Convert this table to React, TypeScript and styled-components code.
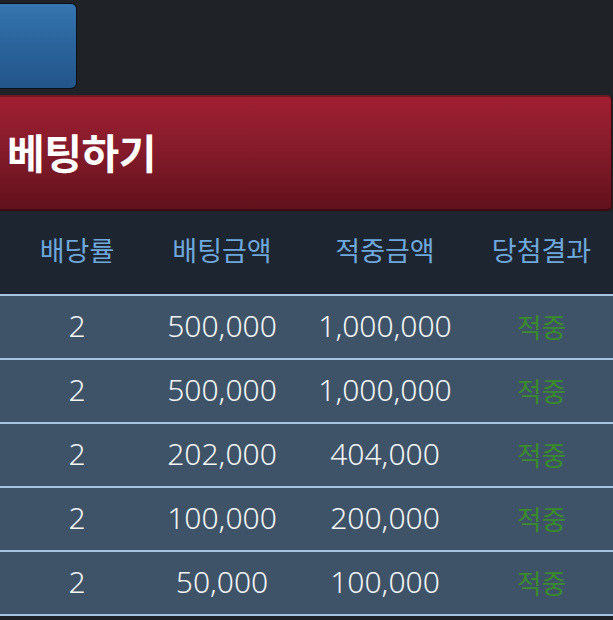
import React from "react";
import styled, { createGlobalStyle } from "styled-components";

const Global = createGlobalStyle`
  html, body { margin: 0; padding: 0; background: #1f2226; }
  body { font-family: "Noto Sans CJK KR", "Noto Sans", sans-serif; overflow: hidden; }
`;

const Page = styled.div`
  width: 613px;
  height: 620px;
  overflow: hidden;
  display: flex;
  flex-direction: column;
  background: #1f2226;
`;

const TopBar = styled.div`
  display: flex;
  padding-top: 3px;
  height: 86px;
`;

const BlueButton = styled.button`
  width: 77px;
  height: 86px;
  padding: 0;
  border: 1px solid #0b1119;
  border-left: none;
  border-radius: 0 6px 6px 0;
  background: linear-gradient(180deg, #3676b0 0%, #2a639b 50%, #23568a 100%);
`;

const TitleBar = styled.div`
  margin-top: 6px;
  margin-right: 1px;
  height: 112px;
  display: flex;
  align-items: center;
  padding-left: 7px;
  border-top: 2px solid #6e1a20;
  border-bottom: 2px solid #3c0a10;
  border-right: 1px solid #3c0a10;
  border-radius: 0 5px 5px 0;
  background: linear-gradient(180deg, #a01f31 0%, #861b2b 45%, #62111c 100%);
`;

const Title = styled.h1`
  margin: 0;
  color: #ffffff;
  font-size: 41px;
  font-weight: 700;
  letter-spacing: -0.5px;
  line-height: 1;
  padding-bottom: 4px;
`;

const Table = styled.div`
  display: flex;
  flex-direction: column;
  background: #1c2530;
  margin-top: 1px;
`;

const Row = styled.div<{ $head?: boolean }>`
  display: grid;
  grid-template-columns: 154px 136px 190px 1fr;
  align-items: center;
  height: ${(p) => (p.$head ? "82px" : "62px")};
  background: ${(p) => (p.$head ? "#1c2530" : "#3e5367")};
  border-bottom: 2px solid #a7c5e2;
  padding-right: 10px;
`;

const Cell = styled.div<{ $kind?: "head" | "num" | "win" }>`
  text-align: center;
  font-size: ${(p) => (p.$kind === "num" ? "30px" : "27px")};
  font-weight: ${(p) => (p.$kind === "num" ? 300 : 400)};
  font-family: ${(p) =>
    p.$kind === "num"
      ? '"Noto Sans", "Noto Sans CJK KR", sans-serif'
      : '"Noto Sans CJK KR", "Noto Sans", sans-serif'};
  line-height: 1;
  padding-bottom: ${(p) => (p.$kind === "head" ? "7px" : p.$kind === "num" ? "3px" : "1px")};
  color: ${(p) =>
    p.$kind === "head" ? "#6ea8dc" : p.$kind === "win" ? "#3a8b2c" : "#f2f4f6"};
`;

const rows = [
  ["2", "500,000", "1,000,000"],
  ["2", "500,000", "1,000,000"],
  ["2", "202,000", "404,000"],
  ["2", "100,000", "200,000"],
  ["2", "50,000", "100,000"],
];

export default function App() {
  return (
    <Page>
      <Global />
      <TopBar>
        <BlueButton aria-label="menu" />
      </TopBar>
      <TitleBar>
        <Title>베팅하기</Title>
      </TitleBar>
      <Table>
        <Row $head>
          <Cell $kind="head">배당률</Cell>
          <Cell $kind="head">배팅금액</Cell>
          <Cell $kind="head">적중금액</Cell>
          <Cell $kind="head">당첨결과</Cell>
        </Row>
        {rows.map((r, i) => (
          <Row key={i}>
            <Cell $kind="num">{r[0]}</Cell>
            <Cell $kind="num">{r[1]}</Cell>
            <Cell $kind="num">{r[2]}</Cell>
            <Cell $kind="win">적중</Cell>
          </Row>
        ))}
      </Table>
    </Page>
  );
}
